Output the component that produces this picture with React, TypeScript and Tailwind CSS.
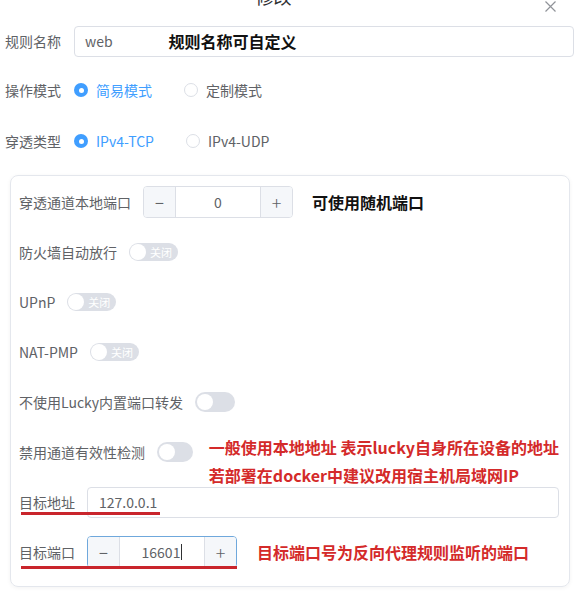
import { ReactNode } from "react";

function Radio({ label, checked }: { label: string; checked?: boolean }) {
  return (
    <label className="flex items-center mr-[32px] cursor-pointer">
      {checked ? (
        <span className="flex items-center justify-center w-[14px] h-[14px] rounded-full bg-[#409eff]">
          <span className="w-[5px] h-[5px] rounded-full bg-white" />
        </span>
      ) : (
        <span className="w-[14px] h-[14px] rounded-full border border-[#dcdfe6] bg-white" />
      )}
      <span className={`ml-[8px] ${checked ? "text-[#409eff]" : "text-[#606266]"}`}>
        {label}
      </span>
    </label>
  );
}

function TextSwitch() {
  return (
    <div className="flex items-center w-[49px] h-[18px] rounded-full bg-[#dcdfe6]">
      <span className="w-[16px] h-[16px] ml-[1px] rounded-full bg-white" />
      <span className="ml-[4px] text-[11px] leading-none text-white">关闭</span>
    </div>
  );
}

function Switch() {
  return (
    <div className="flex items-center w-[40px] h-[20px] rounded-full bg-[#dcdfe6]">
      <span className="w-[16px] h-[16px] ml-[2px] rounded-full bg-white" />
    </div>
  );
}

function NumberInput({ value, focused }: { value: string; focused?: boolean }) {
  return (
    <div
      className={`flex h-8 w-[150px] shrink-0 rounded-[4px] border overflow-hidden ${
        focused ? "border-[#6fa8dc]" : "border-[#dcdfe6]"
      }`}
    >
      <div className="flex w-[32px] items-center justify-center bg-[#f5f7fa] border-r border-[#dcdfe6] text-[16px] text-[#606266]">
        −
      </div>
      <div className="flex flex-1 items-center justify-center text-[#606266]">
        {value}
        {focused && <span className="ml-px w-px h-[16px] bg-[#303133]" />}
      </div>
      <div className="flex w-[32px] items-center justify-center bg-[#f5f7fa] border-l border-[#dcdfe6] text-[18px] font-light text-[#606266]">
        +
      </div>
    </div>
  );
}

function Row({ label, children, last }: { label: string; children: ReactNode; last?: boolean }) {
  return (
    <div className={`relative flex items-center h-8 ${last ? "" : "mb-[18px]"}`}>
      <span className="shrink-0 pr-3 whitespace-nowrap text-[#606266]">{label}</span>
      {children}
    </div>
  );
}

export default function App() {
  return (
    <div className="w-[582px] h-[599px] overflow-hidden bg-white pl-[5px] pr-[8px] text-[14px] text-[#606266] font-['Noto_Sans_CJK_SC',sans-serif]">
      <div className="relative flex h-[25px] justify-center pr-[32px]">
        <span className="-mt-[16px] text-[18px] leading-[24px] text-[#303133]">修改</span>
        <svg
          className="absolute right-[18px] top-[1px]"
          width="11"
          height="11"
          viewBox="0 0 11 11"
          fill="none"
          stroke="#909399"
          strokeWidth="1.2"
        >
          <path d="M0.5 0.5 L10.5 10.5 M10.5 0.5 L0.5 10.5" />
        </svg>
      </div>

      <div className="flex items-center h-8">
        <span className="w-[69px] shrink-0">规则名称</span>
        <div className="flex flex-1 items-center h-[31px] rounded-[4px] border border-[#dcdfe6] pl-[10px]">
          <span className="text-[#606266]">web</span>
          <span className="ml-[56px] text-[16px] font-bold text-[#111]">规则名称可自定义</span>
        </div>
      </div>

      <div className="flex items-center h-8 mt-[17px]">
        <span className="w-[69px] shrink-0">操作模式</span>
        <Radio label="简易模式" checked />
        <Radio label="定制模式" />
      </div>

      <div className="flex items-center h-8 mt-[19px]">
        <span className="w-[69px] shrink-0">穿透类型</span>
        <Radio label="IPv4-TCP" checked />
        <Radio label="IPv4-UDP" />
      </div>

      <div className="mt-[18px] ml-[5px] mr-[4px] rounded-[8px] border border-[#e4e7ed] pl-[8px] pr-[10px] pt-[10px] pb-[18px] shadow-[0_1px_4px_rgba(0,0,0,0.05)]">
        <Row label="穿透通道本地端口">
          <NumberInput value="0" />
          <span className="ml-[19px] text-[16px] font-bold text-[#111]">可使用随机端口</span>
        </Row>
        <Row label="防火墙自动放行">
          <TextSwitch />
        </Row>
        <Row label="UPnP">
          <TextSwitch />
        </Row>
        <Row label="NAT-PMP">
          <TextSwitch />
        </Row>
        <Row label="不使用Lucky内置端口转发">
          <Switch />
        </Row>
        <Row label="禁用通道有效性检测">
          <Switch />
          <div className="self-start -mt-[3px] ml-[16px] whitespace-nowrap text-[16px] font-bold leading-[28px] text-[#d42a2a]">
            <div>一般使用本地地址 表示lucky自身所在设备的地址</div>
            <div>若部署在docker中建议改用宿主机局域网IP</div>
          </div>
        </Row>
        <Row label="目标地址">
          <div className="flex flex-1 items-center h-[31px] rounded-[4px] border border-[#dcdfe6] pl-[11px] text-[#606266]">
            127.0.0.1
          </div>
          <span className="absolute left-[2px] top-[26px] w-[139px] h-[3px] bg-[#c9252c]" />
        </Row>
        <Row label="目标端口" last>
          <NumberInput value="16601" focused />
          <span className="ml-[20px] text-[16px] font-bold text-[#d42a2a]">目标端口号为反向代理规则监听的端口</span>
          <span className="absolute left-[2px] top-[30px] w-[216px] h-[3px] bg-[#c9252c]" />
        </Row>
      </div>
    </div>
  );
}
